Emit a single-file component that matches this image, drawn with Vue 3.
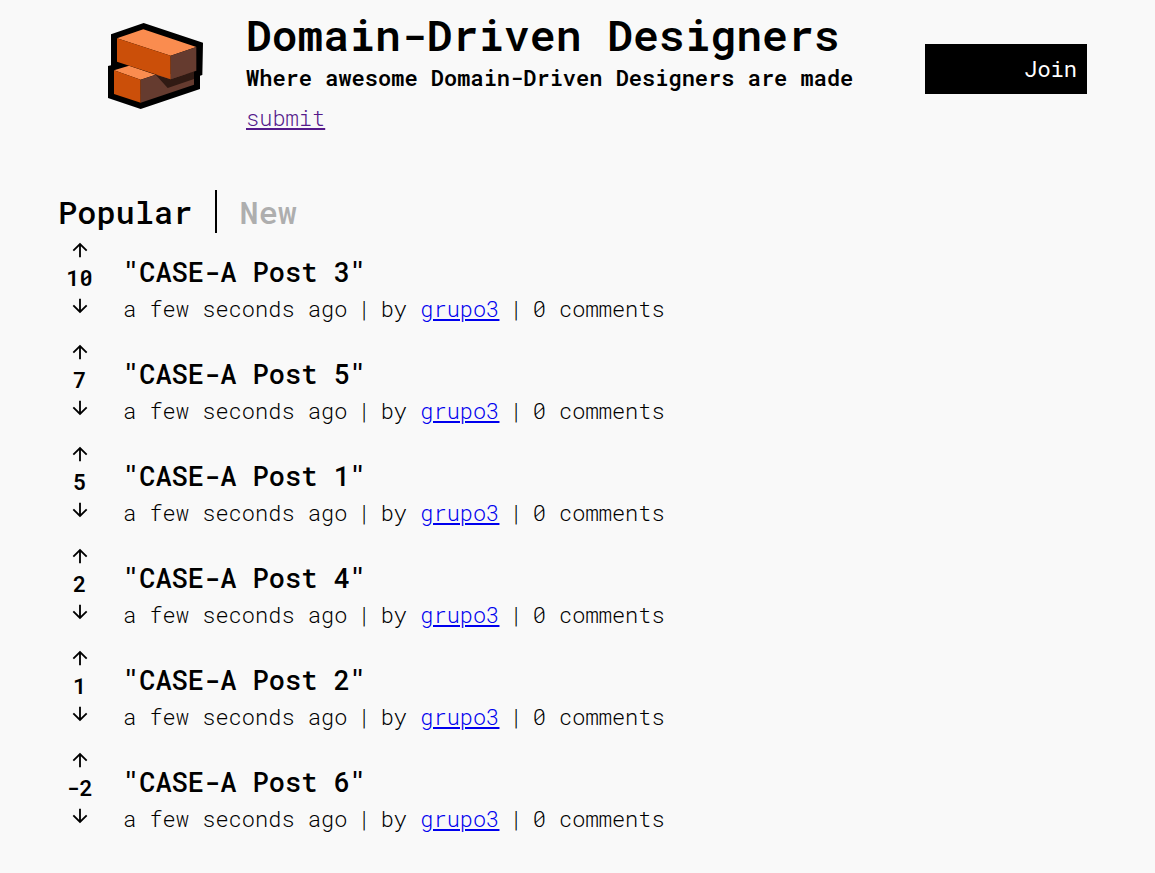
<script setup>
import { ref } from 'vue'

const tab = ref('popular')
const posts = [
  { score: 10, title: '"CASE-A Post 3"' },
  { score: 7, title: '"CASE-A Post 5"' },
  { score: 5, title: '"CASE-A Post 1"' },
  { score: 2, title: '"CASE-A Post 4"' },
  { score: 1, title: '"CASE-A Post 2"' },
  { score: -2, title: '"CASE-A Post 6"' },
]
</script>

<template>
  <div class="page">
    <header class="header">
      <svg class="logo" viewBox="39 39 285 258" role="img" aria-label="Bricks">
        <path fill="#000" d="M146 39 324 98 322 195 315 197V237L137 297 39 264V168L48 166V73Z" />
        <path fill="#fa8c4f" d="M57 181 102 167 182 194 137 209Z" />
        <path fill="#cb4f09" d="M57 181 137 209V278L57 252Z" />
        <path fill="#653b2f" d="M137 209 182 194 297 190V224L137 278Z" />
        <path fill="#301a13" d="M182 194 227 208 297 184V207L218 234Z" />
        <path fill="#fa8c4f" d="M66 85 145 58 304 111 227 137Z" />
        <path fill="#cb4f09" d="M66 85 227 137V208L66 155Z" />
        <path fill="#653b2f" d="M227 137 304 111V182L227 208Z" />
      </svg>
      <div class="intro">
        <h1>Domain-Driven Designers</h1>
        <h2>Where awesome Domain-Driven Designers are made</h2>
        <a class="submit" href="#submit">submit</a>
      </div>
      <button class="join" type="button">Join</button>
    </header>

    <main>
      <nav class="tabs">
        <button type="button" :class="{ active: tab === 'popular' }" @click="tab = 'popular'">Popular</button>
        <button type="button" :class="{ active: tab === 'new' }" @click="tab = 'new'">New</button>
      </nav>

      <article v-for="post in posts" :key="post.title" class="post">
        <div class="votes">
          <button type="button" aria-label="Upvote">
            <svg viewBox="0 0 24 24"><path d="M4 12l1.41 1.41L11 7.83V20h2V7.83l5.58 5.59L20 12l-8-8-8 8z" /></svg>
          </button>
          <span class="score">{{ post.score }}</span>
          <button type="button" aria-label="Downvote">
            <svg viewBox="0 0 24 24"><path d="M20 12l-1.41-1.41L13 16.17V4h-2v12.17l-5.58-5.59L4 12l8 8 8-8z" /></svg>
          </button>
        </div>
        <div class="body">
          <h3>{{ post.title }}</h3>
          <p class="meta">
            <span>a few seconds ago</span>
            <span>|</span>
            <span>by <a href="#grupo3">grupo3</a></span>
            <span>|</span>
            <span>0 comments</span>
          </p>
        </div>
      </article>
    </main>
  </div>
</template>

<style>
body {
  background: #f9f9f9;
}
</style>

<style scoped>
.page {
  padding: 12px 58px 32px;
  font-family: "Roboto Mono", "Liberation Mono", monospace;
  font-size: 22px;
  font-weight: 350;
  color: #000;
}
h1,
h2,
h3,
p {
  margin: 0;
}
button {
  border: 0;
  padding: 0;
  background: none;
  font: inherit;
  color: inherit;
  cursor: pointer;
}
.header {
  display: flex;
  align-items: flex-start;
  padding: 0 10px 0 50px;
}
.logo {
  flex: none;
  width: 95px;
  height: 86px;
  margin: 11px 43px 0 0;
}
.intro {
  flex: 1;
  white-space: nowrap;
}
h1 {
  font-size: 43px;
  line-height: 46px;
  font-weight: 600;
}
h2 {
  font-size: 22px;
  line-height: 40px;
  font-weight: 600;
}
.submit {
  display: inline-block;
  margin-top: 4px;
  line-height: 32px;
  color: #551a8b;
}
.join {
  flex: none;
  width: 162px;
  height: 50px;
  margin-top: 32px;
  padding: 0 10px 2px 0;
  background: #000;
  color: #fff;
  font-weight: 400;
  text-align: right;
}
.tabs {
  display: flex;
  margin-top: 56px;
}
.tabs button {
  padding-right: 23px;
  font-size: 32px;
  line-height: 43px;
  font-weight: 500;
  color: #aeaeae;
}
.tabs button + button {
  padding: 0 0 0 22px;
  border-left: 2px solid #000;
}
.tabs .active {
  color: #000;
}
.post {
  display: flex;
  gap: 22px;
  height: 102px;
}
.votes {
  display: flex;
  flex-direction: column;
  align-items: center;
  width: 43px;
  padding-top: 3px;
}
.votes button {
  display: flex;
  align-items: center;
  height: 28px;
}
.votes svg {
  width: 22px;
  height: 22px;
}
.score {
  line-height: 28px;
  font-weight: 600;
}
.body {
  padding-top: 19px;
  white-space: nowrap;
}
h3 {
  font-size: 27px;
  line-height: 40px;
  font-weight: 500;
}
.meta {
  display: flex;
  gap: 10px;
  line-height: 34px;
}
.meta a {
  color: #0000ee;
}
</style>
